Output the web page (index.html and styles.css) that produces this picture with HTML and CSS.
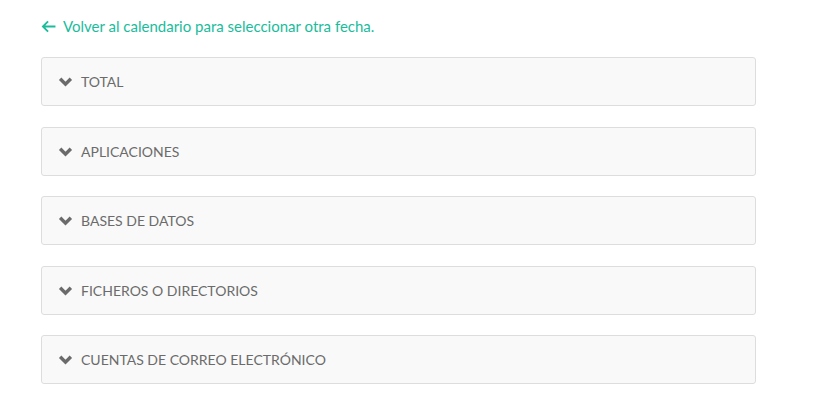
FILE: index.html
```html
<!DOCTYPE html>
<html lang="es">
<head>
    <meta charset="UTF-8">
    <title>Restauración</title>
    <link rel="stylesheet" href="styles.css">
</head>
<body>
    <main class="container">
        <a class="back-link" href="#">
            <svg class="back-icon" viewBox="0 0 16 14" width="15" height="13"><path d="M15.5 7H2M7.5 1.5 2 7l5.5 5.5" fill="none" stroke="currentColor" stroke-width="2"/></svg>
            Volver al calendario para seleccionar otra fecha.
        </a>

        <div class="panels">
            <div class="panel">
                <svg class="chevron" viewBox="0 0 14 10" width="15" height="11"><path d="M2 2.5l5 5 5-5" fill="none" stroke="currentColor" stroke-width="3.2"/></svg>
                <span>TOTAL</span>
            </div>
            <div class="panel">
                <svg class="chevron" viewBox="0 0 14 10" width="15" height="11"><path d="M2 2.5l5 5 5-5" fill="none" stroke="currentColor" stroke-width="3.2"/></svg>
                <span>APLICACIONES</span>
            </div>
            <div class="panel">
                <svg class="chevron" viewBox="0 0 14 10" width="15" height="11"><path d="M2 2.5l5 5 5-5" fill="none" stroke="currentColor" stroke-width="3.2"/></svg>
                <span>BASES DE DATOS</span>
            </div>
            <div class="panel">
                <svg class="chevron" viewBox="0 0 14 10" width="15" height="11"><path d="M2 2.5l5 5 5-5" fill="none" stroke="currentColor" stroke-width="3.2"/></svg>
                <span>FICHEROS O DIRECTORIOS</span>
            </div>
            <div class="panel">
                <svg class="chevron" viewBox="0 0 14 10" width="15" height="11"><path d="M2 2.5l5 5 5-5" fill="none" stroke="currentColor" stroke-width="3.2"/></svg>
                <span>CUENTAS DE CORREO ELECTRÓNICO</span>
            </div>
        </div>
    </main>
</body>
</html>
```

FILE: styles.css
```css
* {
    box-sizing: border-box;
    margin: 0;
    padding: 0;
}

body {
    font-family: Lato, "Open Sans", sans-serif;
    background-color: #fff;
    color: #666;
}

.container {
    width: 715px;
    margin-left: 41px;
    padding-top: 16px;
}

.back-link {
    display: flex;
    align-items: center;
    gap: 7px;
    color: #1abc9c;
    font-size: 15px;
    text-decoration: none;
    height: 20px;
}

.back-icon {
    flex-shrink: 0;
}

.panels {
    display: flex;
    flex-direction: column;
    gap: 20.5px;
    margin-top: 21px;
}

.panel {
    display: flex;
    align-items: center;
    gap: 8px;
    height: 49px;
    padding: 0 16px;
    background-color: #f9f9f9;
    border: 1px solid #ddd;
    border-radius: 3px;
    font-size: 14px;
    color: #6b6b6b;
}

.chevron {
    color: #6b6b6b;
    flex-shrink: 0;
}
```
